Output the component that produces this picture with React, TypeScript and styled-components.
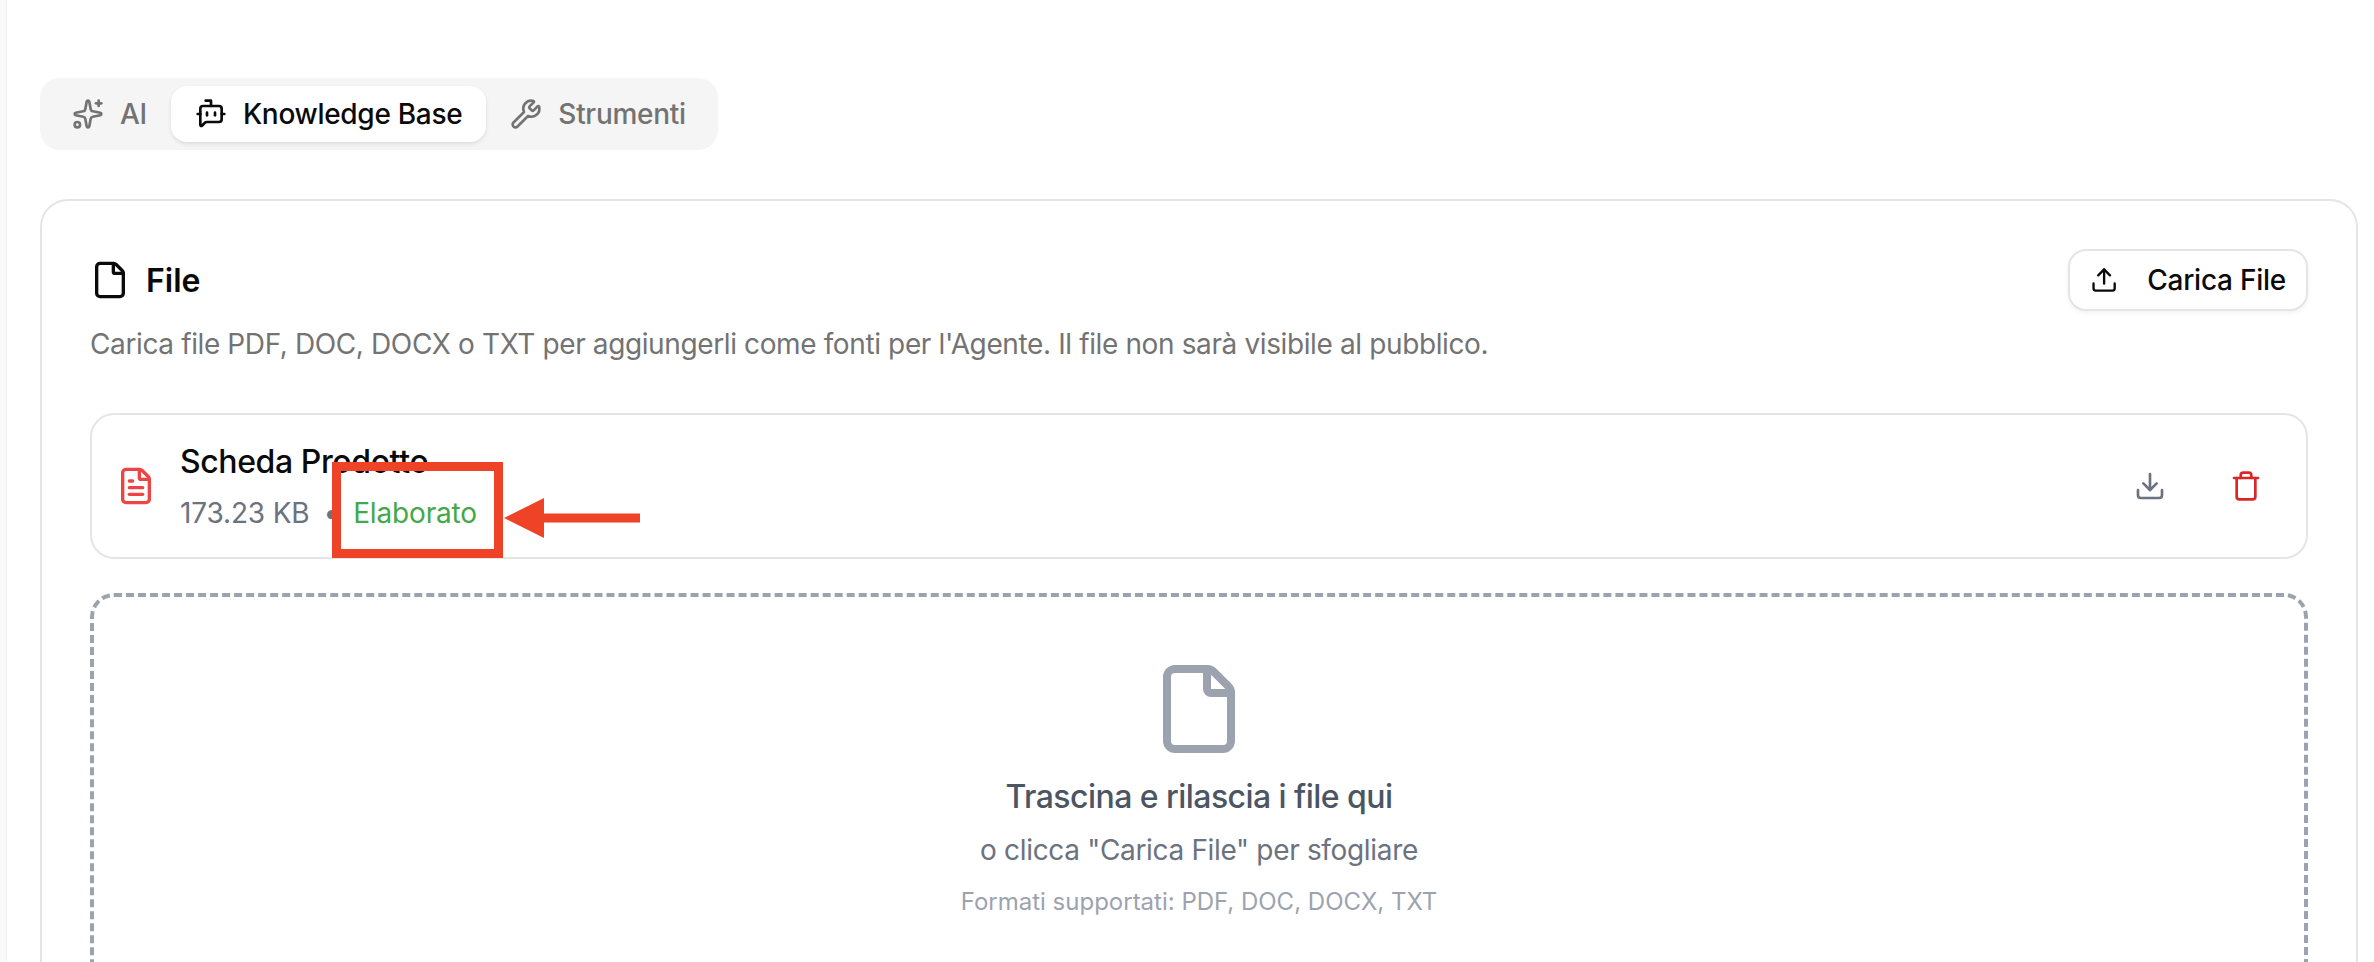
import React from "react";
import styled, { createGlobalStyle } from "styled-components";
import { Sparkles, BotMessageSquare, Wrench, File, Upload, FileText, Download, Trash } from "lucide-react";

const GlobalStyle = createGlobalStyle`
    html, body {
        margin: 0;
        height: 100%;
        background: #ffffff;
        overflow: hidden;
    }
    * {
        box-sizing: border-box;
    }
    body {
        font-family: Inter, "Liberation Sans", sans-serif;
        color: #0a0a0a;
    }
`

const Page = styled.div`
    width: 2374px;
    height: 962px;
    overflow: hidden;
    display: flex;
`
const SideEdge = styled.div`
    width: 7px;
    flex-shrink: 0;
    background: #fafafa;
    border-right: 1px solid #f0f0f0;
`
const Main = styled.main`
    flex: 1;
    padding: 78px 16px 0 33px;
`
const Tabs = styled.div`
    display: inline-flex;
    height: 72px;
    padding: 8px;
    background: #f5f5f5;
    border-radius: 20px;
    margin-bottom: 49px;
    vertical-align: top;
`
const Tab = styled.div<{ $active?: boolean }>`
    display: flex;
    align-items: center;
    gap: 16px;
    padding: 0 24px;
    border-radius: 16px;
    font-size: 28px;
    font-weight: 500;
    letter-spacing: -0.3px;
    color: ${(p) => (p.$active ? "#0a0a0a" : "#737373")};
    background: ${(p) => (p.$active ? "#ffffff" : "transparent")};
    box-shadow: ${(p) => (p.$active ? "0 2px 4px rgba(0,0,0,0.1)" : "none")};
`
const Card = styled.section`
    border: 2px solid #e5e5e5;
    border-radius: 28px;
    padding: 48px;
    height: 900px;
`
const CardHeader = styled.div`
    display: flex;
    align-items: center;
    justify-content: space-between;
    height: 62px;
`
const CardTitle = styled.h2`
    display: flex;
    align-items: center;
    gap: 16px;
    margin: 0;
    font-size: 32px;
    font-weight: 600;
`
const UploadButton = styled.button`
    display: flex;
    align-items: center;
    gap: 29px;
    height: 62px;
    width: 240px;
    padding: 0 20px;
    background: #ffffff;
    border: 2px solid #e5e5e5;
    border-radius: 18px;
    box-shadow: 0 2px 4px rgba(0,0,0,0.05);
    font-family: inherit;
    font-size: 28px;
    font-weight: 500;
    letter-spacing: -0.25px;
    white-space: nowrap;
    color: #0a0a0a;
`
const Description = styled.p`
    margin: 12px 0 48px;
    font-size: 28px;
    line-height: 42px;
    letter-spacing: -0.38px;
    color: #737373;
`
const FileRow = styled.div`
    position: relative;
    display: flex;
    align-items: center;
    gap: 24px;
    height: 146px;
    padding: 0 24px;
    border: 2px solid #e5e5e5;
    border-radius: 24px;
`
const FileInfo = styled.div`
    flex: 1;
`
const FileName = styled.div`
    font-size: 32px;
    font-weight: 500;
    line-height: 48px;
    letter-spacing: -0.4px;
    margin-bottom: 6px;
`
const FileMeta = styled.div`
    display: flex;
    align-items: center;
    gap: 14px;
    font-size: 28px;
    line-height: 42px;
    letter-spacing: -0.15px;
    color: #6b7280;
`
const Status = styled.span`
    color: #43a84a;
`
const Actions = styled.div`
    display: flex;
    gap: 24px;
`
const IconButton = styled.div<{ $color: string }>`
    display: flex;
    align-items: center;
    justify-content: center;
    width: 72px;
    height: 72px;
    color: ${(p) => p.$color};
`
const Highlight = styled.div`
    position: absolute;
    left: 240px;
    top: 47px;
    width: 171px;
    height: 96px;
    border: 9px solid #ee4326;
`
const Arrow = styled.svg`
    position: absolute;
    left: 412px;
    top: 83px;
`
const DropZone = styled.div`
    display: flex;
    flex-direction: column;
    align-items: center;
    margin-top: 34px;
    padding: 64px 48px;
    height: 500px;
    border: 4px dashed #9ca3af;
    border-radius: 24px;
    color: #9ca3af;
`
const DropTitle = styled.div`
    margin-top: 16px;
    font-size: 32px;
    font-weight: 500;
    line-height: 48px;
    letter-spacing: -0.55px;
    color: #4b5563;
`
const DropHint = styled.div`
    margin-top: 8px;
    font-size: 28px;
    line-height: 42px;
    letter-spacing: -0.33px;
    color: #6b7280;
`
const DropFormats = styled.div`
    margin-top: 15px;
    font-size: 24px;
    line-height: 32px;
    color: #9ca3af;
`

const App = () => {
    return (
        <Page>
            <GlobalStyle />
            <SideEdge />
            <Main>
                <Tabs>
                    <Tab><Sparkles size={32} strokeWidth={2} />AI</Tab>
                    <Tab $active><BotMessageSquare size={32} strokeWidth={2} />Knowledge Base</Tab>
                    <Tab><Wrench size={32} strokeWidth={2} />Strumenti</Tab>
                </Tabs>
                <Card>
                    <CardHeader>
                        <CardTitle><File size={40} strokeWidth={2} />File</CardTitle>
                        <UploadButton><Upload size={32} strokeWidth={2} />Carica File</UploadButton>
                    </CardHeader>
                    <Description>
                        Carica file PDF, DOC, DOCX o TXT per aggiungerli come fonti per l'Agente. Il file non sarà visibile al pubblico.
                    </Description>
                    <FileRow>
                        <FileText size={40} strokeWidth={2} color="#ef4444" />
                        <FileInfo>
                            <FileName>Scheda Prodotto</FileName>
                            <FileMeta>
                                <span>173.23 KB</span>
                                <span>•</span>
                                <Status>Elaborato</Status>
                            </FileMeta>
                        </FileInfo>
                        <Actions>
                            <IconButton $color="#6b7280"><Download size={32} strokeWidth={2} /></IconButton>
                            <IconButton $color="#dc2626"><Trash size={32} strokeWidth={2} /></IconButton>
                        </Actions>
                        {/* annotation over the screenshot */}
                        <Highlight />
                        <Arrow width="138" height="40" viewBox="0 0 138 40">
                            <polygon points="0,20 40,0 40,15.5 136,15.5 136,24.5 40,24.5 40,40" fill="#ee4326" />
                        </Arrow>
                    </FileRow>
                    <DropZone>
                        <File size={96} strokeWidth={2} />
                        <DropTitle>Trascina e rilascia i file qui</DropTitle>
                        <DropHint>o clicca "Carica File" per sfogliare</DropHint>
                        <DropFormats>Formati supportati: PDF, DOC, DOCX, TXT</DropFormats>
                    </DropZone>
                </Card>
            </Main>
        </Page>
    );
};

export default App;
